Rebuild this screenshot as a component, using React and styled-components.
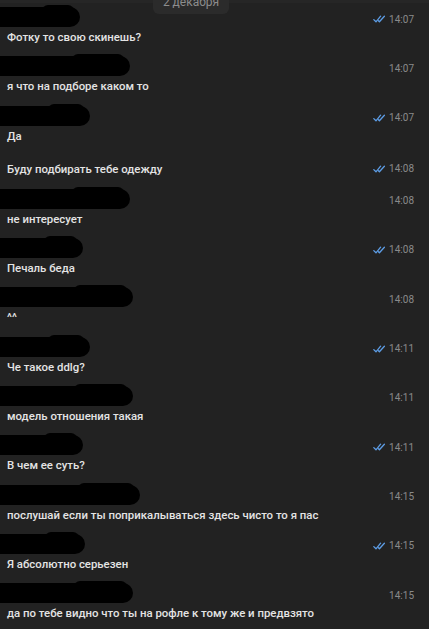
import React from 'react';
import styled, { createGlobalStyle } from 'styled-components';

const GlobalStyle = createGlobalStyle`
    html, body {
        margin: 0;
        padding: 0;
        background: #222222;
    }
    body {
        font-family: Roboto, "Open Sans", sans-serif;
        overflow: hidden;
    }
`;

const messages = [
    { name: 80, time: '14:07', out: true, text: 'Фотку то свою скинешь?' },
    { name: 130, time: '14:07', text: 'я что на подборе каком то' },
    { name: 90, time: '14:07', out: true, text: 'Да' },
    { time: '14:08', out: true, text: 'Буду подбирать тебе одежду', cont: true },
    { name: 130, time: '14:08', text: 'не интересует' },
    { name: 83, time: '14:08', out: true, text: 'Печаль беда' },
    { name: 133, time: '14:08', text: '^^' },
    { name: 90, time: '14:11', out: true, text: 'Че такое ddlg?' },
    { name: 133, time: '14:11', text: 'модель отношения такая' },
    { name: 83, time: '14:11', out: true, text: 'В чем ее суть?' },
    { name: 140, time: '14:15', text: 'послушай если ты поприкалываться здесь чисто то я пас' },
    { name: 85, time: '14:15', out: true, text: 'Я абсолютно серьезен' },
    { name: 133, time: '14:15', text: 'да по тебе видно что ты на рофле к тому же и предвзято' },
];

const Checks = () => (
    <svg width="13" height="8" viewBox="0 0 13 8" fill="none">
        <path d="M0.8 4.6 L3 6.8 L7.6 1.2" stroke="#5d9de6" strokeWidth="1.3" strokeLinecap="round" strokeLinejoin="round" />
        <path d="M5.4 5.8 L6.4 6.8 L11.4 1.2" stroke="#5d9de6" strokeWidth="1.3" strokeLinecap="round" strokeLinejoin="round" />
    </svg>
);

const Meta = ({ time, out }) => (
    <MetaBox>
        {out && <Checks />}
        <Time>{time}</Time>
    </MetaBox>
);

export const App = () => {
    return (
    <>
        <GlobalStyle />
        <Chat>
            <TopBand />
            <DatePill>2 декабря</DatePill>
            <List>
                {messages.map((m, i) => m.cont ? (
                    <Message key={i} cont>
                        <Row>
                            <Text inline>{m.text}</Text>
                            <Meta time={m.time} out={m.out} />
                        </Row>
                    </Message>
                ) : (
                    <Message key={i}>
                        <Header>
                            <Redacted w={m.name} />
                            <Meta time={m.time} out={m.out} />
                        </Header>
                        <Text>{m.text}</Text>
                    </Message>
                ))}
            </List>
            <Footer>
                <Corner />
            </Footer>
        </Chat>
    </>
    );
}

const Chat = styled.div`
    position: relative;
    width: 429px;
    height: 629px;
    background: #222222;
    display: flex;
    flex-direction: column;
    overflow: hidden;
`;

const TopBand = styled.div`
    height: 3px;
    background: #262626;
    flex-shrink: 0;
`;

const DatePill = styled.div`
    position: absolute;
    top: -7px;
    left: 153px;
    width: 76px;
    height: 21px;
    border-radius: 6px;
    background: #2b2b2b;
    color: #8d8d8d;
    font-size: 12px;
    line-height: 19px;
    text-align: center;
    z-index: 2;
`;

const List = styled.div`
    flex: 1;
    display: flex;
    flex-direction: column;
`;

const Message = styled.div`
    padding: ${({ cont }) => cont ? '8.67px 15px 7px 7px' : '7px 15px 6.33px 0'};
`;

const Header = styled.div`
    height: 18px;
    display: flex;
    align-items: center;
    justify-content: space-between;
`;

const Row = styled.div`
    height: 18px;
    display: flex;
    align-items: center;
    justify-content: space-between;
`;

const Redacted = styled.div`
    width: ${({ w }) => w}px;
    height: 20px;
    margin-bottom: 4px;
    background: #000;
    border-radius: 0 11px 11px 0;
    position: relative;

    &::after {
        content: '';
        position: absolute;
        right: 6px;
        top: -2px;
        width: 40%;
        height: 12px;
        border-radius: 8px;
        background: #000;
    }
`;

const Text = styled.div`
    height: 18px;
    line-height: 18px;
    padding-left: ${({ inline }) => inline ? 0 : 7}px;
    font-size: 11.4px;
    font-weight: 500;
    color: #e4e4e4;
    white-space: nowrap;
`;

const MetaBox = styled.div`
    display: flex;
    align-items: center;
    gap: 3px;
`;

const Time = styled.span`
    font-size: 10px;
    color: #8a8a8a;
`;

const Footer = styled.div`
    height: 4px;
    display: flex;
    justify-content: flex-end;
    flex-shrink: 0;
`;

const Corner = styled.div`
    width: 38px;
    height: 4px;
    background: #ffffff;
`;

export default App;
